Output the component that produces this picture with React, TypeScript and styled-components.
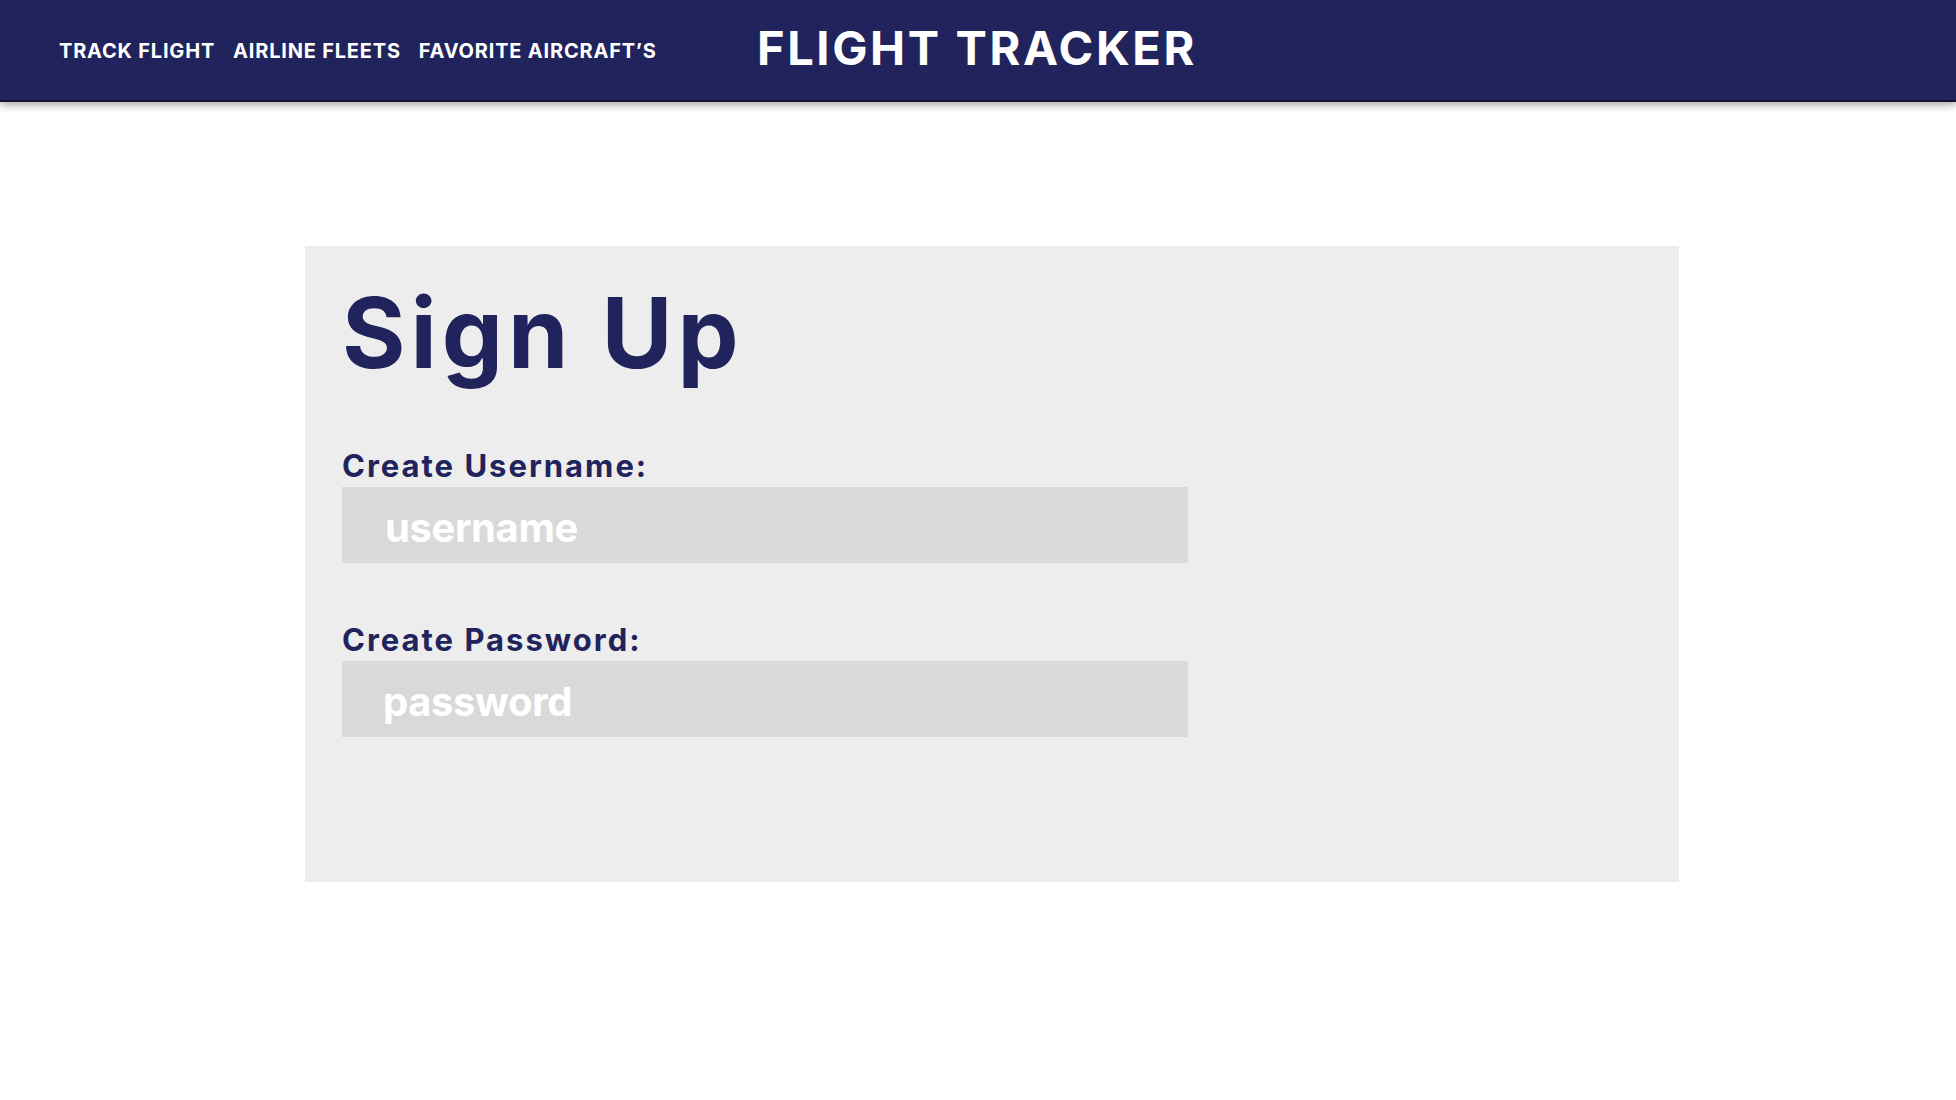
import React from "react";
import styled, { createGlobalStyle } from "styled-components";

const navy = "#21245c";

const GlobalStyle = createGlobalStyle`
  body {
    margin: 0;
    background: #ffffff;
    font-family: Inter, "Open Sans", sans-serif;
  }
`;

const Header = styled.header`
  display: flex;
  align-items: center;
  height: 100px;
  padding-left: 59px;
  background-color: ${navy};
  border-bottom: 2px solid #10122f;
  box-shadow: 0 3px 8px rgba(0, 0, 0, 0.35);
`;

const Nav = styled.nav`
  display: flex;
  gap: 18px;
  width: 698px;
  margin-top: 2px;
`;

const NavLink = styled.a`
  color: white;
  font-size: 20px;
  font-weight: 700;
  letter-spacing: 0.8px;
  line-height: 1;
  text-decoration: none;
  white-space: nowrap;
`;

const Title = styled.h1`
  margin: -5px 0 0;
  color: white;
  font-size: 47px;
  font-weight: 700;
  letter-spacing: 2.6px;
  line-height: 1;
  white-space: nowrap;
`;

const Main = styled.main`
  padding: 144px 0 0 305px;
`;

const Card = styled.section`
  width: 1374px;
  box-sizing: border-box;
  padding: 38px 0 145px 37px;
  background-color: #ededed;
`;

const Heading = styled.h2`
  margin: 0 0 69px;
  color: ${navy};
  font-size: 97px;
  font-weight: 700;
  letter-spacing: 5px;
  line-height: 1;
`;

const Field = styled.div<{ $gap?: number }>`
  display: flex;
  flex-direction: column;
  gap: 6px;
  margin-bottom: ${(p) => p.$gap ?? 0}px;
`;

const Label = styled.label`
  color: ${navy};
  font-size: 31px;
  font-weight: 700;
  letter-spacing: 2px;
  line-height: 1;
`;

const Input = styled.input<{ $indent: number }>`
  width: 846px;
  height: 76px;
  box-sizing: border-box;
  padding: 4px 0 0 ${(p) => p.$indent}px;
  border: none;
  outline: none;
  background-color: #d9d9d9;
  color: white;
  font-family: Inter, "Open Sans", sans-serif;
  font-size: 40px;
  font-weight: 700;
  letter-spacing: -0.4px;

  &::placeholder {
    color: white;
    opacity: 1;
  }
`;

export default function App() {
  return (
    <>
      <GlobalStyle />
      <Header>
        <Nav>
          <NavLink href="#">TRACK FLIGHT</NavLink>
          <NavLink href="#">AIRLINE FLEETS</NavLink>
          <NavLink href="#">FAVORITE AIRCRAFT’S</NavLink>
        </Nav>
        <Title>FLIGHT TRACKER</Title>
      </Header>
      <Main>
        <Card>
          <Heading>Sign Up</Heading>
          <Field $gap={61}>
            <Label htmlFor="username">Create Username:</Label>
            <Input id="username" $indent={43} placeholder="username" />
          </Field>
          <Field>
            <Label htmlFor="password">Create Password:</Label>
            <Input id="password" $indent={41} type="password" placeholder="password" />
          </Field>
        </Card>
      </Main>
    </>
  );
}
